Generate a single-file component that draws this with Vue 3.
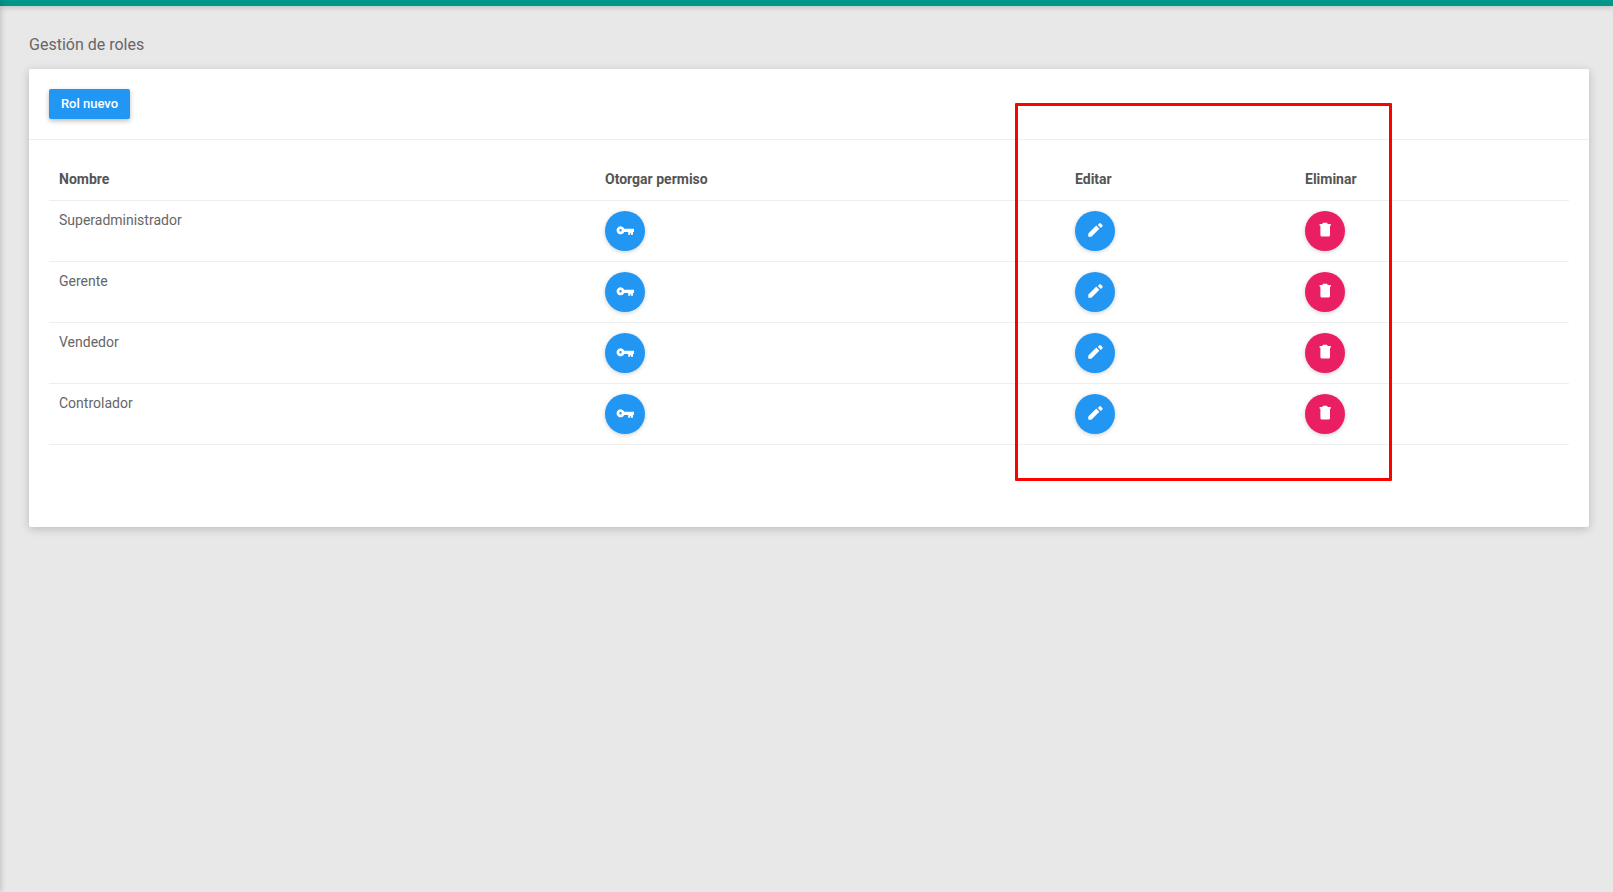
<template>
  <div class="page">
    <div class="topbar"></div>
    <div class="side-shadow"></div>
    <main class="content">
      <h2 class="title">Gestión de roles</h2>
      <section class="card">
        <div class="card-head">
          <button class="btn-new" type="button">Rol nuevo</button>
        </div>
        <div class="card-body">
          <table class="roles">
            <colgroup>
              <col class="c-name" />
              <col class="c-perm" />
              <col class="c-edit" />
              <col />
            </colgroup>
            <thead>
              <tr>
                <th>Nombre</th>
                <th>Otorgar permiso</th>
                <th>Editar</th>
                <th>Eliminar</th>
              </tr>
            </thead>
            <tbody>
              <tr v-for="role in roles" :key="role">
                <td class="name">{{ role }}</td>
                <td v-for="action in actions" :key="action.name">
                  <button class="circle" :class="action.color" type="button">
                    <svg viewBox="0 0 18 18" width="18" height="18" fill="#fff" fill-rule="evenodd">
                      <path :d="action.icon" />
                    </svg>
                  </button>
                </td>
              </tr>
            </tbody>
          </table>
        </div>
      </section>
    </main>
    <div class="red-box"></div>
  </div>
</template>

<script setup>
const roles = ['Superadministrador', 'Gerente', 'Vendedor', 'Controlador']

const actions = [
  {
    name: 'permiso',
    color: 'blue',
    icon: 'M8.2 7.7H18v3.2h-1v2.8h-2.2v-1.6h-.8v1.6h-1.8v-2.8H8.2a4 4 0 1 1 0-3.2zM4.5 8.1a1.2 1.2 0 1 0 0 2.4 1.2 1.2 0 0 0 0-2.4z'
  },
  {
    name: 'editar',
    color: 'blue',
    icon: 'M2.3 12.6v3.1h3.1L13.4 7.7 10.3 4.6zM16.4 5.4c.4-.4.4-.9 0-1.3l-1.7-1.7c-.4-.4-.9-.4-1.3 0l-1.6 1.6 3 3z'
  },
  {
    name: 'eliminar',
    color: 'pink',
    icon: 'M7 1.8h4l.7 1.1h3.1v1.9H14v9.1a1.5 1.5 0 0 1-1.5 1.5H5.9a1.5 1.5 0 0 1-1.5-1.5V4.8h-.8V2.9h2.7z'
  }
]
</script>

<style>
html,
body {
  margin: 0;
  background: #e8e8e8;
}
</style>

<style scoped>
.page {
  position: relative;
  height: 892px;
  overflow: hidden;
  background: #e8e8e8;
  font-family: Roboto, "Liberation Sans", sans-serif;
  color: #555;
}

.topbar {
  height: 6px;
  background: #009688;
  box-shadow: 0 2px 5px rgba(0, 0, 0, 0.16);
}

.side-shadow {
  position: absolute;
  left: -6px;
  top: 0;
  bottom: 0;
  width: 6px;
  box-shadow: 0 0 6px rgba(0, 0, 0, 0.25);
}

.content {
  padding: 0 24px 0 29px;
}

.title {
  margin: 0;
  padding-top: 29px;
  height: 34px;
  font-size: 16px;
  font-weight: 400;
  line-height: 19px;
  color: #666;
}

.card {
  height: 458px;
  background: #fff;
  border-radius: 2px;
  box-shadow: 0 2px 10px rgba(0, 0, 0, 0.2);
}

.card-head {
  height: 71px;
  padding: 20px 20px 0;
  box-sizing: border-box;
  border-bottom: 1px solid #eee;
}

.btn-new {
  display: block;
  width: 81px;
  height: 30px;
  padding: 0 0 2px;
  border: none;
  border-radius: 2px;
  background: #2196f3;
  color: #fff;
  font-family: inherit;
  font-size: 13px;
  font-weight: 500;
  box-shadow: 0 2px 5px rgba(0, 0, 0, 0.26);
}

.card-body {
  padding: 20px 20px 0;
}

.roles {
  width: 1520px;
  table-layout: fixed;
  border-collapse: collapse;
  font-size: 14px;
}

.c-name {
  width: 546px;
}

.c-perm {
  width: 470px;
}

.c-edit {
  width: 230px;
}

th {
  height: 40px;
  padding: 0 10px 2px;
  box-sizing: border-box;
  text-align: left;
  vertical-align: middle;
  font-weight: 700;
  color: #555;
  border-bottom: 1px solid #eee;
}

td {
  height: 60px;
  padding: 10px;
  box-sizing: border-box;
  vertical-align: top;
  line-height: 20px;
  color: #666;
  border-bottom: 1px solid #eee;
}

td.name {
  padding-top: 9px;
}

.circle {
  display: flex;
  align-items: center;
  justify-content: center;
  width: 40px;
  height: 40px;
  padding: 0;
  border: none;
  border-radius: 50%;
  box-shadow: 0 1px 4px rgba(0, 0, 0, 0.2);
}

.circle svg {
  margin-bottom: 2px;
}

.blue {
  background: #2196f3;
}

.pink {
  background: #e91e63;
}

.red-box {
  position: absolute;
  left: 1015px;
  top: 103px;
  width: 377px;
  height: 378px;
  box-sizing: border-box;
  border: 3px solid #f00;
  border-radius: 1px;
}
</style>
